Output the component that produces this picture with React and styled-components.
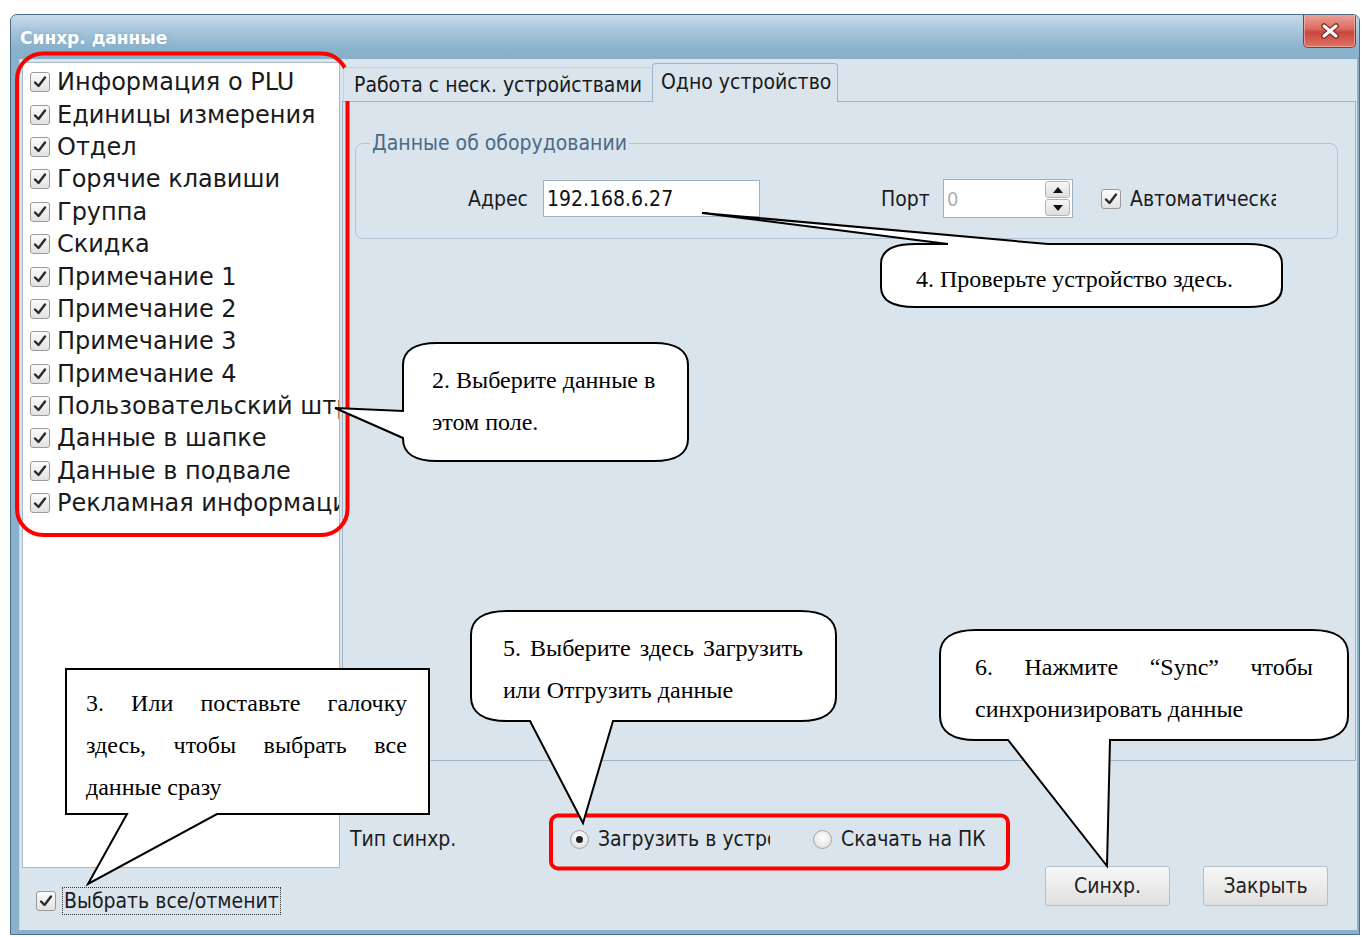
import React from "react";
import styled, { createGlobalStyle } from "styled-components";

const UI_FONT = `"DejaVu Sans Condensed", "DejaVu Sans", sans-serif`;
const LIST_FONT = `"DejaVu Sans", sans-serif`;
const SERIF = `"Liberation Serif", "Times New Roman", serif`;

const GlobalStyle = createGlobalStyle`
  html, body { margin: 0; padding: 0; background: #ffffff; }
  body { font-family: ${UI_FONT}; color: #1c1c1c; }
  *, *::before, *::after { box-sizing: border-box; }
`;

const Page = styled.div`
  position: relative;
  width: 1362px;
  height: 937px;
  padding: 14px 0 0 10px;
  overflow: hidden;
`;

const Window = styled.div`
  width: 1350px;
  height: 921px;
  border: 1px solid #4a6d8e;
  border-radius: 7px 7px 0 0;
  background: #8ab1cc;
  display: flex;
  flex-direction: column;
  overflow: hidden;
`;

const TitleBar = styled.div`
  height: 44px;
  flex: none;
  display: flex;
  align-items: flex-start;
  justify-content: space-between;
  padding-left: 9px;
  background: linear-gradient(180deg, #c8dcea 0%, #a8c6db 35%, #8bb2cd 75%, #87afca 100%);
`;

const Title = styled.div`
  margin-top: 13px;
  font-family: "DejaVu Sans", sans-serif;
  font-weight: bold;
  font-size: 17px;
  color: #ffffff;
  text-shadow: 0 0 4px rgba(120, 160, 190, 0.6);
`;

const CloseButton = styled.div`
  width: 53px;
  height: 34px;
  margin-top: -1px;
  margin-right: 3px;
  border: 1px solid #8c3a33;
  border-top: none;
  border-radius: 0 0 5px 5px;
  background: linear-gradient(180deg, #eba59b 0%, #dc6a5f 45%, #c8463d 55%, #e07367 100%);
  display: flex;
  align-items: center;
  justify-content: center;
  box-shadow: inset 0 0 0 1px rgba(255, 210, 200, 0.5);
`;

const Frame = styled.div`
  flex: 1;
  display: flex;
  padding: 0 2px 4px 8px;
`;

const Client = styled.div`
  flex: 1;
  background: #dae4ed;
  border-left: 1px solid #c9d8e4;
  display: grid;
  grid-template-columns: 318px 1fr;
  column-gap: 2px;
  padding: 0 1px 0 2px;
`;

const LeftColumn = styled.div`
  display: flex;
  flex-direction: column;
`;

const ListBox = styled.div`
  margin-top: 3px;
  height: 806px;
  background: #ffffff;
  border: 1px solid #a7bacb;
  padding: 3px 5px 0 7px;
  overflow: hidden;
`;

const ListItem = styled.div`
  height: 32.4px;
  display: flex;
  align-items: center;
  gap: 7px;
  white-space: nowrap;
  font-family: ${LIST_FONT};
  font-size: 24px;
  color: #1a1a1a;
`;

const Box = styled.span`
  flex: none;
  width: 20px;
  height: 20px;
  border: 1px solid #9a9a9a;
  border-radius: 3px;
  background: linear-gradient(180deg, #fbfbfb 0%, #e2e2e2 100%);
  display: inline-flex;
  align-items: center;
  justify-content: center;
`;

const CheckBox = () => (
  <Box>
    <svg width="16" height="16" viewBox="0 0 16 16">
      <path d="M3 8.5 L6.5 12 L13 3.5" fill="none" stroke="#2a2a2a" strokeWidth="2.4" strokeLinecap="round" strokeLinejoin="round" />
    </svg>
  </Box>
);

const SelectAllRow = styled.div`
  margin-top: 19px;
  height: 28px;
  display: flex;
  align-items: center;
  gap: 6px;
  padding-left: 14px;
`;

const FocusText = styled.span`
  font-size: 21px;
  line-height: 26px;
  padding: 0 1px;
  border: 1px dotted #333;
  white-space: nowrap;
`;

const RightColumn = styled.div`
  display: flex;
  flex-direction: column;
  min-width: 0;
`;

const TabBar = styled.div`
  margin-top: 4px;
  height: 38px;
  display: flex;
  align-items: flex-end;
  padding-left: 1px;
  position: relative;
  z-index: 1;
`;

const Tab = styled.div`
  width: ${(p) => p.$w}px;
  height: ${(p) => (p.$active ? 39 : 34)}px;
  margin-bottom: ${(p) => (p.$active ? -1 : 0)}px;
  padding-left: ${(p) => (p.$active ? 8 : 10)}px;
  padding-bottom: ${(p) => (p.$active ? 2 : 0)}px;
  display: flex;
  align-items: center;
  font-size: 21px;
  white-space: nowrap;
  overflow: hidden;
  color: #1a1a1a;
  background: #dae4ed;
  border: 1px solid ${(p) => (p.$active ? "#9fb4c7" : "#c4d2de")};
  border-bottom: none;
  border-radius: 4px 4px 0 0;
  ${(p) => (p.$active ? "" : "border-right: none;")}
`;

const TabPane = styled.div`
  height: 660px;
  border: 1px solid #9fb4c7;
  background: #dae4ed;
  padding: 29px 17px 0 12px;
`;

const GroupBox = styled.fieldset`
  margin: 0;
  min-width: 0;
  border: 1px solid #b1c4d5;
  border-radius: 8px;
  padding: 0 0 20px 0;
`;

const Legend = styled.legend`
  margin-left: 14px;
  padding: 0 2px;
  font-size: 21px;
  line-height: 24px;
  color: #4b6a88;
`;

const FieldRow = styled.div`
  margin-top: 24px;
  height: 39px;
  display: flex;
  align-items: center;
`;

const FieldLabel = styled.span`
  width: ${(p) => p.$w}px;
  margin-left: ${(p) => p.$ml || 0}px;
  text-align: right;
  font-size: 21px;
  white-space: nowrap;
`;

const TextInput = styled.div`
  margin-left: 15px;
  width: 217px;
  height: 37px;
  background: #ffffff;
  border: 1px solid #9cb1c4;
  padding-left: 3px;
  display: flex;
  align-items: center;
  font-size: 21px;
  color: #111;
`;

const SpinBox = styled.div`
  margin-left: 14px;
  width: 130px;
  height: 39px;
  background: #ffffff;
  border: 1px solid #9cb1c4;
  display: flex;
  align-items: center;
  justify-content: space-between;
  padding: 0 2px 0 3px;
  font-size: 20px;
  color: #b0b0b0;
`;

const SpinButtons = styled.div`
  width: 25px;
  height: 35px;
  display: flex;
  flex-direction: column;
  gap: 1px;
`;

const SpinButton = styled.div`
  flex: 1;
  border: 1px solid #b5b5b5;
  border-radius: 3px;
  background: linear-gradient(180deg, #f7f7f7, #dedede);
  display: flex;
  align-items: center;
  justify-content: center;
`;

const AutoCheck = styled.div`
  margin-left: 28px;
  display: flex;
  align-items: center;
  gap: 9px;
`;

const ClippedText = styled.span`
  display: block;
  width: ${(p) => p.$w}px;
  overflow: hidden;
  white-space: nowrap;
  font-size: 21px;
  color: #1c1c1c;
`;

const SyncRow = styled.div`
  margin-top: 63px;
  height: 30px;
  display: flex;
  align-items: center;
  padding-left: 8px;
`;

const SyncLabel = styled.span`
  width: 220px;
  font-size: 21px;
  white-space: nowrap;
`;

const RadioOption = styled.div`
  display: flex;
  align-items: center;
  gap: 9px;
  margin-right: ${(p) => p.$mr || 0}px;
`;

const RadioCircle = styled.span`
  flex: none;
  width: 19px;
  height: 19px;
  border-radius: 50%;
  border: 1px solid #a4a4a4;
  background: radial-gradient(circle at 50% 40%, #ffffff 0%, #e6e6e6 70%, #d6d6d6 100%);
  display: inline-flex;
  align-items: center;
  justify-content: center;
  &::after {
    content: "";
    display: ${(p) => (p.$checked ? "block" : "none")};
    width: 7px;
    height: 7px;
    border-radius: 50%;
    background: #222;
  }
`;

const ButtonRow = styled.div`
  margin-top: 12px;
  display: flex;
  justify-content: flex-end;
  gap: 33px;
  padding-right: 28px;
`;

const Button = styled.div`
  width: 125px;
  height: 40px;
  border: 1px solid #b9bec4;
  border-radius: 3px;
  background: linear-gradient(180deg, #f6f6f6 0%, #ececec 50%, #dfdfdf 100%);
  display: flex;
  align-items: center;
  justify-content: center;
  font-size: 21px;
  color: #222;
`;

/* ---------- annotation overlay ---------- */

const Overlay = styled.div`
  position: absolute;
  inset: 0;
  pointer-events: none;
`;

const OverlaySvg = styled.svg`
  position: absolute;
  left: 0;
  top: 0;
`;

const CalloutText = styled.div`
  position: absolute;
  left: ${(p) => p.$x}px;
  top: ${(p) => p.$y}px;
  width: ${(p) => p.$w}px;
  font-family: ${SERIF};
  font-size: 24px;
  line-height: 42px;
  color: #000;
`;

const CalloutLine = styled.div`
  white-space: nowrap;
  text-align: left;
  ${(p) => (p.$justify ? "text-align-last: justify; white-space: normal;" : "")}
`;

function bubble({ x1, y1, x2, y2, rx = 0, ry = 0, wedge }) {
  const k = 0.35;
  const w = wedge || {};
  const tip = w.tip ? `L ${w.tip[0]} ${w.tip[1]}` : "";
  const d = [];
  d.push(`M ${x1 + rx} ${y1}`);
  if (w.side === "top") d.push(`L ${w.a} ${y1} ${tip} L ${w.b} ${y1}`);
  d.push(`L ${x2 - rx} ${y1}`);
  d.push(`C ${x2 - rx * k} ${y1} ${x2} ${y1 + ry * k} ${x2} ${y1 + ry}`);
  d.push(`L ${x2} ${y2 - ry}`);
  d.push(`C ${x2} ${y2 - ry * k} ${x2 - rx * k} ${y2} ${x2 - rx} ${y2}`);
  if (w.side === "bottom") d.push(`L ${w.b} ${y2} ${tip} L ${w.a} ${y2}`);
  d.push(`L ${x1 + rx} ${y2}`);
  d.push(`C ${x1 + rx * k} ${y2} ${x1} ${y2 - ry * k} ${x1} ${y2 - ry}`);
  if (w.side === "left") d.push(`L ${x1} ${w.b} ${tip} L ${x1} ${w.a}`);
  d.push(`L ${x1} ${y1 + ry}`);
  d.push(`C ${x1} ${y1 + ry * k} ${x1 + rx * k} ${y1} ${x1 + rx} ${y1}`);
  d.push("Z");
  return d.join(" ");
}

const bubbles = [
  { x1: 403, y1: 343, x2: 688, y2: 461, rx: 34, ry: 22, wedge: { side: "left", a: 411, b: 438, tip: [335, 408] } },
  { x1: 66, y1: 669, x2: 429, y2: 814, wedge: { side: "bottom", a: 127, b: 217, tip: [88, 884] } },
  { x1: 881, y1: 244, x2: 1282, y2: 307, rx: 34, ry: 20, wedge: { side: "top", a: 948, b: 1048, tip: [702, 213] } },
  { x1: 471, y1: 611, x2: 836, y2: 721, rx: 36, ry: 24, wedge: { side: "bottom", a: 530, b: 613, tip: [583, 823] } },
  { x1: 940, y1: 630, x2: 1348, y2: 740, rx: 36, ry: 24, wedge: { side: "bottom", a: 1008, b: 1110, tip: [1107, 866] } },
];

const callouts = [
  { x: 432, y: 359, w: 250, lines: [["2. Выберите данные в"], ["этом поле."]] },
  { x: 86, y: 682, w: 321, lines: [["3. Или поставьте галочку", true], ["здесь, чтобы выбрать все", true], ["данные сразу"]] },
  { x: 916, y: 258, w: 350, lines: [["4. Проверьте устройство здесь."]] },
  { x: 503, y: 627, w: 300, lines: [["5. Выберите здесь Загрузить", true], ["или Отгрузить данные"]] },
  { x: 975, y: 646, w: 338, lines: [["6. Нажмите “Sync” чтобы", true], ["синхронизировать данные"]] },
];

const items = [
  "Информация о PLU",
  "Единицы измерения",
  "Отдел",
  "Горячие клавиши",
  "Группа",
  "Скидка",
  "Примечание 1",
  "Примечание 2",
  "Примечание 3",
  "Примечание 4",
  "Пользовательский штрих-код",
  "Данные в шапке",
  "Данные в подвале",
  "Рекламная информация",
];

export default function App() {
  return (
    <>
      <GlobalStyle />
      <Page>
        <Window>
          <TitleBar>
            <Title>Синхр. данные</Title>
            <CloseButton>
              <svg width="20" height="16" viewBox="0 0 20 16">
                <path d="M4 3 L16 13 M16 3 L4 13" stroke="#7a2a24" strokeWidth="5.5" strokeLinecap="round" />
                <path d="M4 3 L16 13 M16 3 L4 13" stroke="#ffffff" strokeWidth="3" strokeLinecap="round" />
              </svg>
            </CloseButton>
          </TitleBar>
          <Frame>
            <Client>
              <LeftColumn>
                <ListBox>
                  {items.map((t) => (
                    <ListItem key={t}>
                      <CheckBox />
                      <span>{t}</span>
                    </ListItem>
                  ))}
                </ListBox>
                <SelectAllRow>
                  <CheckBox />
                  <FocusText>Выбрать все/отменит</FocusText>
                </SelectAllRow>
              </LeftColumn>
              <RightColumn>
                <TabBar>
                  <Tab $w={309}>Работа с неск. устройствами</Tab>
                  <Tab $w={186} $active>Одно устройство</Tab>
                </TabBar>
                <TabPane>
                  <GroupBox>
                    <Legend>Данные об оборудовании</Legend>
                    <FieldRow>
                      <FieldLabel $w={172}>Адрес</FieldLabel>
                      <TextInput>192.168.6.27</TextInput>
                      <FieldLabel $w={48} $ml={121}>Порт</FieldLabel>
                      <SpinBox>
                        <span>0</span>
                        <SpinButtons>
                          <SpinButton>
                            <svg width="10" height="6" viewBox="0 0 10 6"><path d="M0 6 L5 0 L10 6 Z" fill="#111" /></svg>
                          </SpinButton>
                          <SpinButton>
                            <svg width="10" height="6" viewBox="0 0 10 6"><path d="M0 0 L10 0 L5 6 Z" fill="#111" /></svg>
                          </SpinButton>
                        </SpinButtons>
                      </SpinBox>
                      <AutoCheck>
                        <CheckBox />
                        <ClippedText $w={146}>Автоматическая проверка</ClippedText>
                      </AutoCheck>
                    </FieldRow>
                  </GroupBox>
                </TabPane>
                <SyncRow>
                  <SyncLabel>Тип синхр.</SyncLabel>
                  <RadioOption $mr={43}>
                    <RadioCircle $checked />
                    <ClippedText $w={172}>Загрузить в устройство</ClippedText>
                  </RadioOption>
                  <RadioOption>
                    <RadioCircle />
                    <ClippedText $w={160}>Скачать на ПК</ClippedText>
                  </RadioOption>
                </SyncRow>
                <ButtonRow>
                  <Button>Синхр.</Button>
                  <Button>Закрыть</Button>
                </ButtonRow>
              </RightColumn>
            </Client>
          </Frame>
        </Window>

        <Overlay>
          <OverlaySvg width="1362" height="937" viewBox="0 0 1362 937">
            <rect x="17" y="53.5" width="330.5" height="481.5" rx="26" fill="none" stroke="#ff0000" strokeWidth="4" />
            <rect x="551" y="815.5" width="457" height="53" rx="7" fill="none" stroke="#ff0000" strokeWidth="4" />
            {bubbles.map((b, i) => (
              <path key={i} d={bubble(b)} fill="#ffffff" stroke="#000000" strokeWidth="2" strokeLinejoin="miter" />
            ))}
          </OverlaySvg>
          {callouts.map((c, i) => (
            <CalloutText key={i} $x={c.x} $y={c.y} $w={c.w}>
              {c.lines.map(([t, j], k) => (
                <CalloutLine key={k} $justify={j}>{t}</CalloutLine>
              ))}
            </CalloutText>
          ))}
        </Overlay>
      </Page>
    </>
  );
}
